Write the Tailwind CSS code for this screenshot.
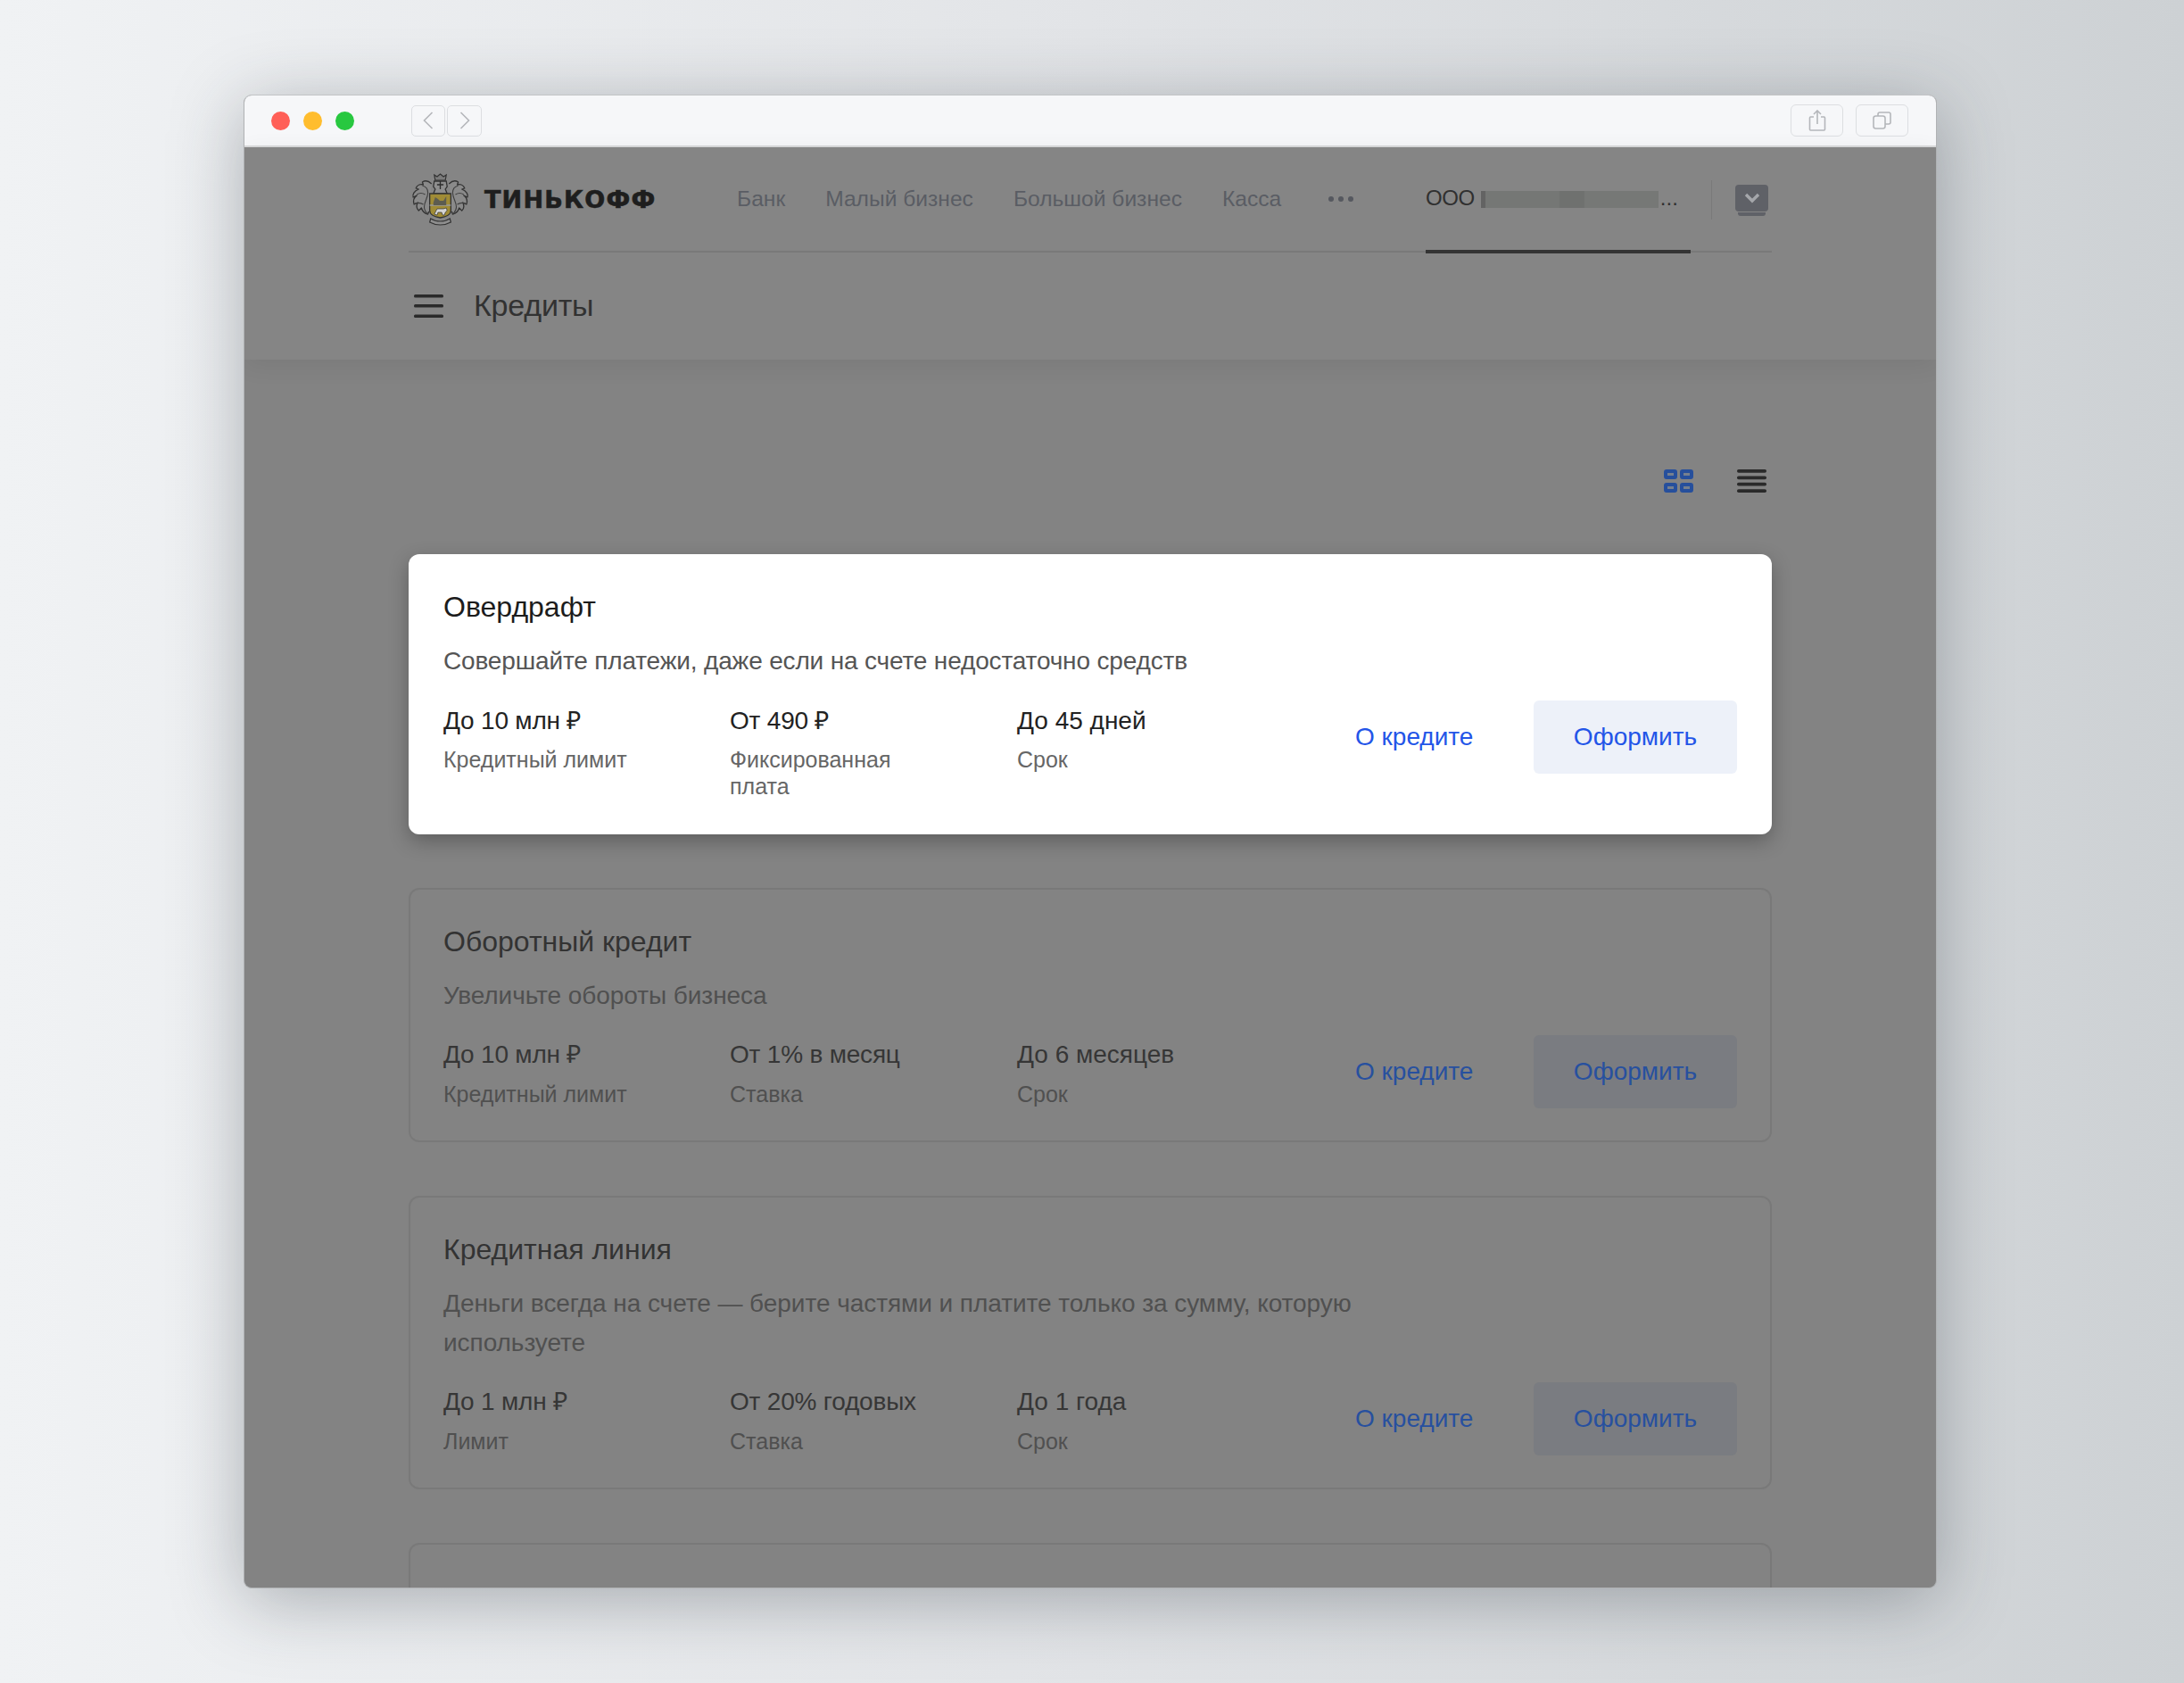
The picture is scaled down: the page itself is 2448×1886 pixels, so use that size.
<!DOCTYPE html>
<html lang="ru"><head><meta charset="utf-8"><script src="https://cdn.jsdelivr.net/npm/@tailwindcss/browser@4"></script></head>
<body class="m-0">
<div class="w-[2448px] h-[1886px] overflow-hidden bg-linear-to-r from-[#f0f2f4] via-[#e2e4e7] to-[#cdd1d4] pl-[273px] pt-[106px] font-['Liberation_Sans',Arial,sans-serif]">
  <div class="w-[1898px] h-[1674px] rounded-[9px] overflow-hidden bg-[#838383] flex flex-col shadow-[0_14px_80px_rgba(40,50,60,0.34)] border border-[#b0b2b4] border-t-[#c2c4c6]">
    <!-- title bar -->
    <div class="h-[58px] shrink-0 bg-[#f6f7f9] border-b-2 border-[#d9dadb] flex items-center pl-[30px] pr-[31px]">
      <div class="flex gap-[15px]">
        <span class="w-[21px] h-[21px] rounded-full bg-[#ff5f57]"></span>
        <span class="w-[21px] h-[21px] rounded-full bg-[#ffbd2e]"></span>
        <span class="w-[21px] h-[21px] rounded-full bg-[#28c840]"></span>
      </div>
      <div class="ml-[64px] flex gap-[2px]">
        <div class="w-[38px] h-[35px] rounded-[5px] border border-[#dcdee1] flex items-center justify-center">
          <svg width="12" height="20" viewBox="0 0 12 20" fill="none" stroke="#b4b6ba" stroke-width="1.6"><path d="M10.5 1 1.5 10l9 9"/></svg>
        </div>
        <div class="w-[39px] h-[35px] rounded-[5px] border border-[#dcdee1] flex items-center justify-center">
          <svg width="12" height="20" viewBox="0 0 12 20" fill="none" stroke="#b4b6ba" stroke-width="1.6"><path d="M1.5 1l9 9-9 9"/></svg>
        </div>
      </div>
      <div class="ml-auto flex gap-[14px]">
        <div class="w-[59px] h-[36px] rounded-[6px] border border-[#dcdee1] flex items-center justify-center">
          <svg width="20" height="24" viewBox="0 0 20 24" fill="none" stroke="#b4b6ba" stroke-width="1.6"><path d="M6 8H2.5a1 1 0 0 0-1 1v13a1 1 0 0 0 1 1h15a1 1 0 0 0 1-1V9a1 1 0 0 0-1-1H14"/><path d="M10 16V1M6 5l4-4 4 4"/></svg>
        </div>
        <div class="w-[59px] h-[36px] rounded-[6px] border border-[#dcdee1] flex items-center justify-center">
          <svg width="21" height="20" viewBox="0 0 21 20" fill="none" stroke="#b4b6ba" stroke-width="1.6"><rect x="1" y="5" width="13" height="14" rx="2.5"/><path d="M6 5V3a2 2 0 0 1 2-2h10a2 2 0 0 1 2 2v9a2 2 0 0 1-2 2h-4"/></svg>
        </div>
      </div>
    </div>
    <!-- header -->
    <div class="relative shrink-0 h-[238px] px-[184px] bg-[#858585] shadow-[0_6px_26px_rgba(0,0,0,0.07)]">
      <div class="h-[118px] border-b-2 border-[#797979] flex items-start relative">
        <svg class="mt-[29px] ml-[1px] shrink-0" width="69" height="60" viewBox="0 0 67 60" preserveAspectRatio="none" fill="none">
          <path d="M28 8l-1-6 3 2 3.500-3 3.500 3 3-2-1 6z" fill="#7b7b7b" stroke="#333" stroke-width="1.200"/>
          <path d="M27 9h13l1 6-2 3 2 5H26l2-5-2-3z" fill="#8e8e8e" stroke="#333" stroke-width="1.300"/>
          <path d="M30 13h7M33.500 9v9" stroke="#2c2c2c" stroke-width="1.300"/>
          <path d="M24 12c-3-3-7-4-10-2l1 3c-4-1-7 1-8 4l3 1c-5 2-7 6-6 9l4-2c-4 3-4 7-3 10l4-2c-2 4-1 7 1 9l3-3c1 4 3 6 7 7l1-3" fill="#8a8a8a" stroke="#343434" stroke-width="1.300" stroke-linejoin="round"/>
          <path d="M14 14c4 1 6 4 6 8 0 6-4 10-4 16 0 3 2 6 4 8M8 24c3-2 6-2 9 0M6 34c3-1 6-1 9 1" stroke="#404040" stroke-width="1.100"/>
          <path d="M43 12c3-3 7-4 10-2l-1 3c4-1 7 1 8 4l-3 1c5 2 7 6 6 9l-4-2c4 3 4 7 3 10l-4-2c2 4 1 7-1 9l-3-3c-1 4-3 6-7 7l-1-3" fill="#8a8a8a" stroke="#343434" stroke-width="1.300" stroke-linejoin="round"/>
          <path d="M53 14c-4 1-6 4-6 8 0 6 4 10 4 16 0 3-2 6-4 8M59 24c-3-2-6-2-9 0M61 34c-3-1-6-1-9 1" stroke="#404040" stroke-width="1.100"/>
          <path d="M22 23h23v19c0 4-5 7-11.500 8-6.500-1-11.500-4-11.500-8z" fill="#a08c36" stroke="#333" stroke-width="1.300"/>
          <path d="M22 36h23" stroke="#9a9a9a" stroke-width="1.500"/>
          <path d="M26 33l2-6 3 2 2 2h4l3-5v10H26z" fill="#5c5c50"/>
          <path d="M27 46l3-6h7l3-1 1 3-2 2-1 3h-2l-1-3h-4l-1 3z" fill="#d4d4d4" stroke="#333" stroke-width=".7"/>
          <path d="M23 51c6 4 15 4 21 0l1 4c-7 4-16 4-23 0z" fill="#8e8e8e" stroke="#333" stroke-width="1.200"/>
        </svg>
        <span class="ml-[15px] mt-[43px] font-['DejaVu_Sans'] font-bold text-[27px] leading-[32px] tracking-[1.2px] [-webkit-text-stroke:0.6px_#1e1e1e] text-[#1e1e1e]">ТИНЬКОФФ</span>
        <nav class="absolute left-[368px] top-[43px] flex text-[24.6px] leading-[30px] text-[#5a5d64] gap-[45px]">
          <span>Банк</span><span>Малый бизнес</span><span>Большой бизнес</span><span>Касса</span>
          <span class="flex items-center gap-[5px] ml-[8px]"><i class="w-[6px] h-[6px] rounded-full bg-[#55585f]"></i><i class="w-[6px] h-[6px] rounded-full bg-[#55585f]"></i><i class="w-[6px] h-[6px] rounded-full bg-[#55585f]"></i></span>
        </nav>
        <div class="absolute left-[1140px] top-0 w-[297px] h-[119px] border-b-[4px] border-[#343434] flex items-start pt-[42px] text-[24px] leading-[30px] text-[#303030]">
          <span class="tracking-[-0.4px]">ООО</span>
          <span class="ml-[7px] mt-[7px] w-[199px] h-[19px] flex border-l-[5px] border-[#636363]">
            <i class="w-[83px] bg-[#757775]"></i><i class="w-[28px] bg-[#6f716f]"></i><i class="flex-1 bg-[#767876]"></i>
          </span>
          <span class="ml-[2px]">...</span>
        </div>
        <span class="absolute left-[1460px] top-[37px] w-[1px] h-[44px] bg-[#797979]"></span>
        <div class="absolute left-[1487px] top-[42px] w-[37px] flex flex-col items-center">
          <div class="w-[37px] h-[30px] rounded-[4px] bg-[#5f6167] flex items-center justify-center">
            <svg width="18" height="12" viewBox="0 0 18 12" fill="none" stroke="#a5a7ab" stroke-width="3.400"><path d="M2 2l7 7 7-7"/></svg>
          </div>
          <div class="w-[31px] h-[4px] mt-[1px] rounded-b-[3px] bg-[#5f6167]"></div>
        </div>
      </div>
      <div class="flex items-center h-[120px] pl-[6px] gap-[34px]">
        <svg width="33" height="26" viewBox="0 0 33 26" fill="#2a2a2a"><rect y="0" width="33" height="3.600" rx="1.500"/><rect y="11" width="33" height="3.600" rx="1.500"/><rect y="22.400" width="33" height="3.600" rx="1.500"/></svg>
        <span class="-mt-[2px] text-[34px] leading-[40px] tracking-[-0.2px] text-[#323232]">Кредиты</span>
      </div>
    </div>
    <!-- main -->
    <div class="px-[184px]">
      <div class="h-[218px] flex justify-end items-start pt-[123px] pr-[6px] gap-[49px]">
        <svg width="33" height="26" viewBox="0 0 33 26" fill="#76808f" stroke="#264f9c" stroke-width="4"><rect x="2" y="2" width="11" height="7" rx="1"/><rect x="20" y="2" width="11" height="7" rx="1"/><rect x="2" y="17" width="11" height="7" rx="1"/><rect x="20" y="17" width="11" height="7" rx="1"/></svg>
        <svg width="33" height="26" viewBox="0 0 33 26" fill="#2a2a2a"><rect width="33" height="3.800" rx="1.800"/><rect y="7.400" width="33" height="3.800" rx="1.800"/><rect y="14.800" width="33" height="3.800" rx="1.800"/><rect y="22.200" width="33" height="3.800" rx="1.800"/></svg>
      </div>
      <div class="flex flex-col gap-[60px]">
        <!-- active card -->
        <section class="h-[314px] rounded-[12px] bg-white pl-[39px] pr-[39px] pt-[39px] shadow-[0_8px_22px_rgba(0,0,0,0.28)]">
          <h2 class="text-[32px] leading-[40px] text-[#1c1c1c]">Овердрафт</h2>
          <p class="mt-[19px] max-w-[1040px] text-[28px] leading-[44px] tracking-[-0.16px] text-[#555]">Совершайте платежи, даже если на счете недостаточно средств</p>
          <div class="mt-[25px] flex items-start">
            <div class="w-[321px]"><div class="text-[28px] leading-[40px] tracking-[-0.2px] text-[#222]">До 10 млн ₽</div><div class="mt-[8px] max-w-[240px] text-[25px] leading-[30px] text-[#666]">Кредитный лимит</div></div>
            <div class="w-[322px]"><div class="text-[28px] leading-[40px] tracking-[-0.2px] text-[#222]">От 490 ₽</div><div class="mt-[8px] max-w-[240px] text-[25px] leading-[30px] text-[#666]">Фиксированная плата</div></div>
            <div class="w-[379px]"><div class="text-[28px] leading-[40px] text-[#222]">До 45 дней</div><div class="mt-[8px] max-w-[240px] text-[25px] leading-[30px] text-[#666]">Срок</div></div>
            <span class="-mt-[3px] h-[82px] flex items-center text-[28px] text-[#2355e8]">О кредите</span>
            <span class="ml-auto -mt-[3px] w-[228px] h-[82px] rounded-[6px] bg-[#edf1f9] flex items-center justify-center text-[28px] text-[#2355e8]">Оформить</span>
          </div>
        </section>
        <section class="h-[285px] rounded-[12px] border-2 border-[#797979] pl-[37px] pr-[37px] pt-[38px]">
          <h2 class="text-[32px] leading-[40px] text-[#333]">Оборотный кредит</h2>
          <p class="mt-[19px] max-w-[1040px] text-[28px] leading-[44px] tracking-[-0.05px] text-[#505050]">Увеличьте обороты бизнеса</p>
          <div class="mt-[24px] flex items-start">
            <div class="w-[321px]"><div class="text-[28px] leading-[40px] tracking-[-0.2px] text-[#363636]">До 10 млн ₽</div><div class="mt-[9px] text-[25px] leading-[30px] text-[#505050]">Кредитный лимит</div></div>
            <div class="w-[322px]"><div class="text-[28px] leading-[40px] tracking-[-0.2px] text-[#363636]">От 1% в месяц</div><div class="mt-[9px] text-[25px] leading-[30px] text-[#505050]">Ставка</div></div>
            <div class="w-[379px]"><div class="text-[28px] leading-[40px] text-[#363636]">До 6 месяцев</div><div class="mt-[9px] text-[25px] leading-[30px] text-[#505050]">Срок</div></div>
            <span class="-mt-[2px] h-[82px] flex items-center text-[28px] text-[#27509f]">О кредите</span>
            <span class="ml-auto -mt-[2px] w-[228px] h-[82px] rounded-[6px] bg-[#7a7c81] flex items-center justify-center text-[28px] text-[#27509f]">Оформить</span>
          </div>
        </section>
        <section class="h-[329px] rounded-[12px] border-2 border-[#797979] pl-[37px] pr-[37px] pt-[38px]">
          <h2 class="text-[32px] leading-[40px] text-[#333]">Кредитная линия</h2>
          <p class="mt-[19px] max-w-[1040px] text-[28px] leading-[44px] tracking-[-0.05px] text-[#505050]">Деньги всегда на счете — берите частями и платите только за сумму, которую используете</p>
          <div class="mt-[24px] flex items-start">
            <div class="w-[321px]"><div class="text-[28px] leading-[40px] tracking-[-0.2px] text-[#363636]">До 1 млн ₽</div><div class="mt-[9px] text-[25px] leading-[30px] text-[#505050]">Лимит</div></div>
            <div class="w-[322px]"><div class="text-[28px] leading-[40px] tracking-[-0.2px] text-[#363636]">От 20% годовых</div><div class="mt-[9px] text-[25px] leading-[30px] text-[#505050]">Ставка</div></div>
            <div class="w-[379px]"><div class="text-[28px] leading-[40px] text-[#363636]">До 1 года</div><div class="mt-[9px] text-[25px] leading-[30px] text-[#505050]">Срок</div></div>
            <span class="-mt-[2px] h-[82px] flex items-center text-[28px] text-[#27509f]">О кредите</span>
            <span class="ml-auto -mt-[2px] w-[228px] h-[82px] rounded-[6px] bg-[#7a7c81] flex items-center justify-center text-[28px] text-[#27509f]">Оформить</span>
          </div>
        </section>
        <section class="h-[200px] rounded-[12px] border-2 border-[#797979]"></section>
      </div>
    </div>
  </div>
</div>
</body></html>
